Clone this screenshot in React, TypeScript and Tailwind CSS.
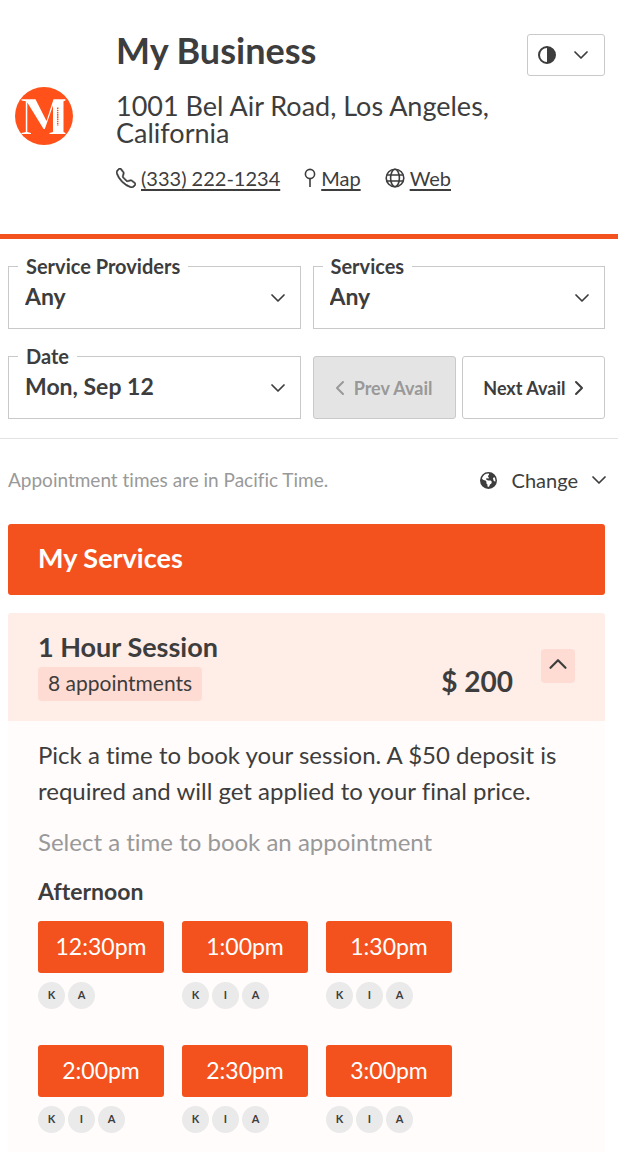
import type { ReactNode } from "react";
import { ChevronDown, ChevronLeft, ChevronRight, ChevronUp } from "lucide-react";
import { BsTelephone } from "react-icons/bs";
import { FaEarthAmericas } from "react-icons/fa6";

interface Slot {
  time: string;
  providers: string[];
}

const SLOTS: Slot[] = [
  { time: "12:30pm", providers: ["K", "A"] },
  { time: "1:00pm", providers: ["K", "I", "A"] },
  { time: "1:30pm", providers: ["K", "I", "A"] },
  { time: "2:00pm", providers: ["K", "I", "A"] },
  { time: "2:30pm", providers: ["K", "I", "A"] },
  { time: "3:00pm", providers: ["K", "I", "A"] },
];

export default function App() {
  return (
    <div className="min-h-screen bg-white font-['Lato','Liberation_Sans',sans-serif] text-[#3d3d3d] [font-variant-ligatures:none]">
      <BusinessHeader />
      <Filters />
      <main className="pr-[13px] pl-2">
        <div className="flex items-start justify-between pt-[29px] pb-8">
          <p className="text-[19px] leading-6 text-[#999]">Appointment times are in Pacific Time.</p>
          <button type="button" className="flex items-center text-[20px] leading-6">
            <FaEarthAmericas size={17} className="mr-[15px]" />
            Change
            <ChevronDown size={24} strokeWidth={1.75} className="-mr-[6px] ml-[9px]" />
          </button>
        </div>
        <h2 className="rounded-[3px] bg-[#f3521e] px-[30px] pt-4 pb-5 text-[27px] leading-[35px] font-bold text-white">
          My Services
        </h2>
        <ServiceCard />
      </main>
    </div>
  );
}

function BusinessHeader() {
  return (
    <header className="flex items-start border-b-[5px] border-[#f3521e] pt-[30px] pr-[13px] pb-11 pl-[15px]">
      <Logo />
      <div className="ml-[43px] flex-1">
        <h1 className="text-[36px] leading-10 font-bold">My Business</h1>
        <p className="mt-[22px] text-[27px] leading-[27px]">
          1001 Bel Air Road, Los Angeles, California
        </p>
        <div className="mt-5 flex items-center gap-6 text-[20px] leading-6">
          <ContactLink href="tel:3332221234" icon={<BsTelephone size={20} strokeWidth={0.4} />}>
            (333) 222-1234
          </ContactLink>
          <ContactLink href="#map" icon={<PinIcon />}>
            Map
          </ContactLink>
          <ContactLink href="#web" icon={<GlobeIcon />}>
            Web
          </ContactLink>
        </div>
      </div>
      <button
        type="button"
        aria-label="Theme"
        className="mt-1 flex h-[42px] w-[78px] items-center justify-between rounded-[3px] border border-[#c9c9c9] pr-[11px] pl-[10px]"
      >
        <ContrastIcon />
        <ChevronDown size={24} strokeWidth={1.75} />
      </button>
    </header>
  );
}

function ContactLink({
  href,
  icon,
  children,
}: {
  href: string;
  icon: ReactNode;
  children: ReactNode;
}) {
  return (
    <a href={href} className="flex items-center gap-[5px]">
      {icon}
      <span className="underline underline-offset-3">{children}</span>
    </a>
  );
}

function Filters() {
  return (
    <section className="grid grid-cols-2 gap-x-3 gap-y-[15px] border-b border-[#e2e2e2] pt-[15px] pr-[13px] pb-[19px] pl-2">
      <FilterSelect id="providers" label="Service Providers" value="Any" />
      <FilterSelect id="services" label="Services" value="Any" />
      <FilterSelect id="date" label="Date" value="Mon, Sep 12" />
      <div className="grid grid-cols-2 gap-[6px] self-end text-[18px] leading-6 font-bold">
        <button
          type="button"
          disabled
          className="flex h-[63px] items-center justify-center gap-[2px] rounded-[3px] border border-[#c9c9c9] bg-[#e4e4e4] pr-2 text-[#999]"
        >
          <ChevronLeft size={24} />
          Prev Avail
        </button>
        <button
          type="button"
          className="flex h-[63px] items-center justify-center gap-[2px] rounded-[3px] border border-[#c9c9c9] bg-white pl-2"
        >
          Next Avail
          <ChevronRight size={24} />
        </button>
      </div>
    </section>
  );
}

function FilterSelect({ id, label, value }: { id: string; label: string; value: string }) {
  return (
    <fieldset className="h-[75px] min-w-0 border border-[#c9c9c9]">
      <legend className="ml-[9px] px-2 text-[20px] leading-6 font-bold">
        <label htmlFor={id}>{label}</label>
      </legend>
      <div className="relative">
        <select
          id={id}
          defaultValue={value}
          className="h-9 w-full appearance-none bg-transparent pl-4 text-[23px] leading-8 font-bold"
        >
          <option>{value}</option>
        </select>
        <ChevronDown
          size={24}
          strokeWidth={1.75}
          className="pointer-events-none absolute top-2 right-[10px]"
        />
      </div>
    </fieldset>
  );
}

function ServiceCard() {
  return (
    <article className="mt-[18px]">
      <div className="flex rounded-t-[3px] bg-[#ffede8] px-[30px] pt-[18px] pb-5">
        <div className="flex-1">
          <h3 className="text-[27px] leading-8 font-bold">1 Hour Session</h3>
          <span className="mt-1 inline-block rounded-[4px] bg-[#fedcd3] px-[10px] pb-[2px] text-[21px] leading-8">
            8 appointments
          </span>
        </div>
        <p className="mr-7 self-end pb-1 text-[28px] leading-8 font-bold">$ 200</p>
        <button
          type="button"
          aria-label="Collapse"
          className="mt-[18px] flex size-[34px] items-center justify-center rounded-[4px] bg-[#fedcd3] pb-1"
        >
          <ChevronUp size={30} strokeWidth={1.75} />
        </button>
      </div>
      <div className="bg-[#fffcfb] px-[30px] pt-4 pb-5">
        <p className="text-[24px] leading-9">
          Pick a time to book your session. A $50 deposit is required and will get applied to your
          final price.
        </p>
        <p className="mt-[15px] text-[24px] leading-9 text-[#999]">
          Select a time to book an appointment
        </p>
        <h4 className="mt-[15px] text-[23px] leading-8 font-bold">Afternoon</h4>
        <ul className="mt-[14px] flex flex-wrap gap-x-[18px] gap-y-9">
          {SLOTS.map((slot) => (
            <li key={slot.time} className="w-[126px]">
              <button
                type="button"
                className="h-[52px] w-full rounded-[3px] bg-[#f3521e] pb-[2px] text-[23px] leading-8 text-white"
              >
                {slot.time}
              </button>
              <div className="mt-[9px] flex gap-[3px]">
                {slot.providers.map((p) => (
                  <span
                    key={p}
                    className="flex size-[27px] items-center justify-center rounded-full bg-[#eaeaea] text-[11px] font-bold"
                  >
                    {p}
                  </span>
                ))}
              </div>
            </li>
          ))}
        </ul>
      </div>
    </article>
  );
}

function Logo() {
  return (
    <svg viewBox="0 0 58 58" className="mt-[57px] size-[58px] shrink-0" role="img" aria-label="Logo">
      <circle cx="29" cy="29" r="29" fill="#ff5119" />
      <path
        fill="#fff"
        d="M6.500 12.300H20.500L31.500 34L38.500 12.300H50.500V13.500L48.500 14.300V45L50.500 45.900V47.100H34.500V45.900L38 45V18.500L29.800 42H28.600L12.300 15.500V45L16 45.900V47.100H6.500V45.900L10.800 45V14.300L6.500 13.500z"
      />
      <path stroke="#ff5119" strokeDasharray="1.6 .6" strokeWidth="1.5" d="M42.700 20.500v18" />
    </svg>
  );
}

function PinIcon() {
  return (
    <svg width="12" height="20" viewBox="0 0 12 20" fill="none" stroke="currentColor" strokeWidth="1.6">
      <circle cx="6" cy="6" r="4.6" />
      <path d="M6 10.600V19" />
    </svg>
  );
}

function GlobeIcon() {
  return (
    <svg width="20" height="20" viewBox="0 0 20 20" fill="none" stroke="currentColor" strokeWidth="1.6">
      <circle cx="10" cy="10" r="8.800" />
      <ellipse cx="10" cy="10" rx="4.400" ry="8.800" />
      <path d="M1.800 7h16.400M1.800 13h16.400" />
    </svg>
  );
}

function ContrastIcon() {
  return (
    <svg width="18" height="18" viewBox="0 0 18 18">
      <circle cx="9" cy="9" r="8" fill="none" stroke="currentColor" strokeWidth="2" />
      <path d="M9 1a8 8 0 0 1 0 16z" fill="currentColor" />
    </svg>
  );
}
